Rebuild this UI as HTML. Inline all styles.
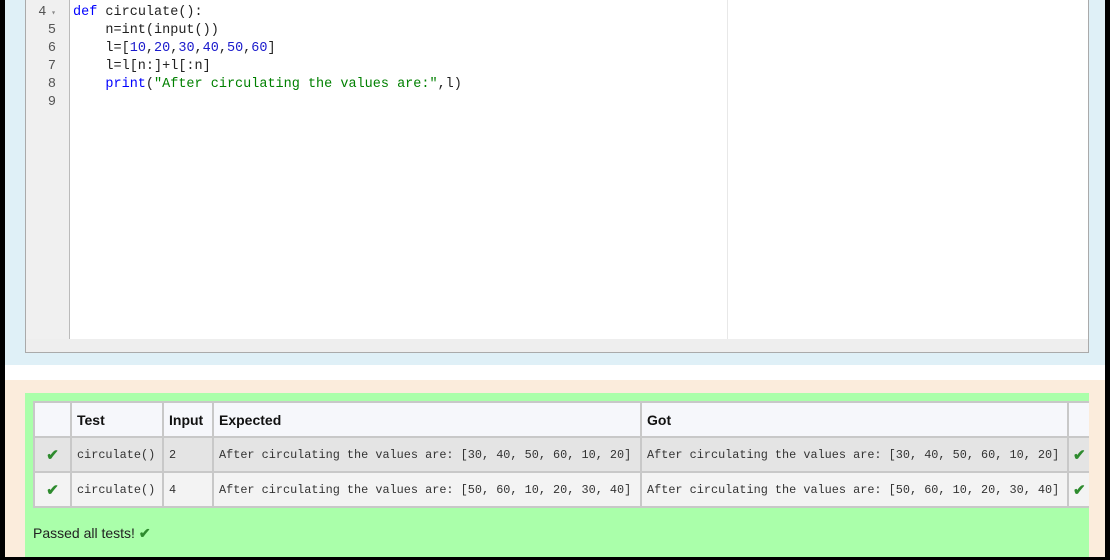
<!DOCTYPE html>
<html><head><style>
*{margin:0;padding:0;box-sizing:border-box}
body{width:1110px;height:560px;background:#000;position:relative;overflow:hidden;font-family:"Liberation Sans",sans-serif}
.blue{position:absolute;left:5px;top:0;width:1100px;height:365px;background:#dff0f7}
.white{position:absolute;left:5px;top:365px;width:1100px;height:15px;background:#fff}
.peach{position:absolute;left:5px;top:380px;width:1100px;height:177px;background:#fbecdc}
.ed{position:absolute;left:25px;top:-1px;width:1064px;height:354px;border:1px solid #aaa;background:#eee}
.gut{position:absolute;left:0;top:0;width:43px;height:339px;background:#f0f0f0}
.code{position:absolute;left:43px;top:0;width:1019px;height:339px;background:#fff;border-left:1px solid #bbb}
.margin{position:absolute;left:657px;top:0;width:1px;height:339px;background:#e8e8e8}
.ln{position:absolute;left:0;width:30px;text-align:right;font:13.5px "Liberation Mono",monospace;color:#555;line-height:18px}
.cl{position:absolute;left:3px;font:13.5px "Liberation Mono",monospace;line-height:18px;white-space:pre;color:#222}
.k{color:#00f}.n{color:#1a1acc}.s{color:#008000}
.green{position:absolute;left:25px;top:393px;width:1064px;height:164px;background:#aaffaa;overflow:hidden}
table{position:absolute;left:8px;top:8px;border-collapse:collapse;font-size:14px;table-layout:fixed;width:1067px}
td,th{border:2px solid #c8c8c8;height:35px;padding:0 5px;text-align:left;white-space:nowrap;overflow:hidden}
th{background:#f6f7fb;font-weight:bold;color:#111}
.m{font:11.85px "Liberation Mono",monospace;color:#333}
.r1 td{background:#e4e4e4}.r2 td{background:#f3f3f3}
.ck{color:#2e8b2e;font-size:15px;font-weight:bold;text-align:center}
.pass{position:absolute;left:33px;top:525px;font-size:14px;color:#222}
</style></head><body>
<div class="blue"></div><div class="white"></div><div class="peach"></div>
<div class="ed">
<div class="gut">
<div class="ln" style="top:4px">4<span style="font-size:8px;color:#888"> ▾</span></div>
<div class="ln" style="top:22px">5</div><div class="ln" style="top:40px">6</div><div class="ln" style="top:58px">7</div><div class="ln" style="top:76px">8</div><div class="ln" style="top:94px">9</div>
</div>
<div class="code"><div class="margin"></div>
<div class="cl" style="top:4px"><span class="k">def</span> circulate():</div>
<div class="cl" style="top:22px">    n=int(input())</div>
<div class="cl" style="top:40px">    l=[<span class="n">10</span>,<span class="n">20</span>,<span class="n">30</span>,<span class="n">40</span>,<span class="n">50</span>,<span class="n">60</span>]</div>
<div class="cl" style="top:58px">    l=l[n:]+l[:n]</div>
<div class="cl" style="top:76px">    <span class="k">print</span>(<span class="s">"After circulating the values are:"</span>,l)</div>
</div></div>
<div class="green">
<table>
<colgroup><col style="width:37px"><col style="width:92px"><col style="width:50px"><col style="width:428px"><col style="width:427px"><col style="width:33px"></colgroup>
<tr><th></th><th>Test</th><th>Input</th><th>Expected</th><th>Got</th><th></th></tr>
<tr class="r1"><td class="ck">✔</td><td class="m">circulate()</td><td class="m">2</td><td class="m">After circulating the values are: [30, 40, 50, 60, 10, 20]</td><td class="m">After circulating the values are: [30, 40, 50, 60, 10, 20]</td><td class="ck" style="text-align:left;padding-left:4px">✔</td></tr>
<tr class="r2"><td class="ck">✔</td><td class="m">circulate()</td><td class="m">4</td><td class="m">After circulating the values are: [50, 60, 10, 20, 30, 40]</td><td class="m">After circulating the values are: [50, 60, 10, 20, 30, 40]</td><td class="ck" style="text-align:left;padding-left:4px">✔</td></tr>
</table>
</div>
<div class="pass">Passed all tests! <span style="color:#2e8b2e;font-weight:bold">✔</span></div>
</body></html>
